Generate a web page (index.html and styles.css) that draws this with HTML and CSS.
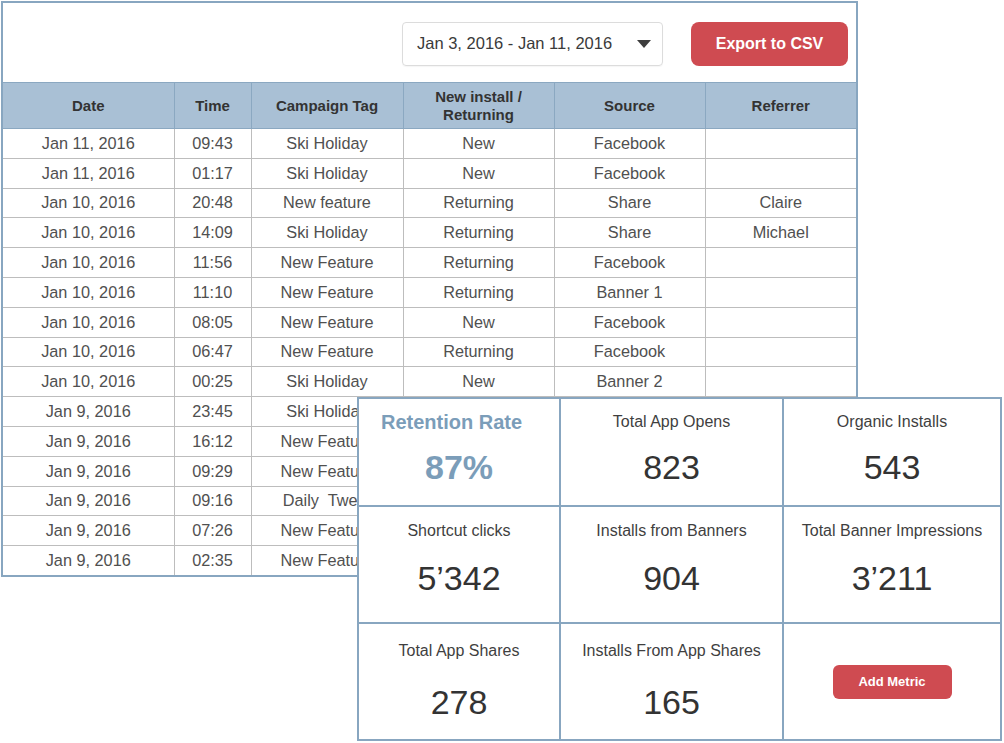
FILE: index.html
```html
<!DOCTYPE html>
<html>
<head>
<meta charset="utf-8">
<link rel="stylesheet" href="styles.css">
</head>
<body>
<div class="panel">
  <div class="toolbar">
    <div class="date-picker">
      <span>Jan 3, 2016 - Jan 11, 2016</span>
      <svg class="caret" width="14" height="8" viewBox="0 0 14 8"><path d="M0 0 L14 0 L7 8 Z" fill="#3d3d3d"/></svg>
    </div>
    <button class="btn-export">Export to CSV</button>
  </div>
  <table class="data">
    <colgroup>
      <col class="c-date"><col class="c-time"><col class="c-tag"><col class="c-new"><col class="c-src"><col class="c-ref">
    </colgroup>
    <thead>
      <tr><th>Date</th><th>Time</th><th>Campaign Tag</th><th>New install /<br>Returning</th><th>Source</th><th>Referrer</th></tr>
    </thead>
    <tbody>
      <tr><td>Jan 11, 2016</td><td>09:43</td><td>Ski Holiday</td><td>New</td><td>Facebook</td><td></td></tr>
      <tr><td>Jan 11, 2016</td><td>01:17</td><td>Ski Holiday</td><td>New</td><td>Facebook</td><td></td></tr>
      <tr><td>Jan 10, 2016</td><td>20:48</td><td>New feature</td><td>Returning</td><td>Share</td><td>Claire</td></tr>
      <tr><td>Jan 10, 2016</td><td>14:09</td><td>Ski Holiday</td><td>Returning</td><td>Share</td><td>Michael</td></tr>
      <tr><td>Jan 10, 2016</td><td>11:56</td><td>New Feature</td><td>Returning</td><td>Facebook</td><td></td></tr>
      <tr><td>Jan 10, 2016</td><td>11:10</td><td>New Feature</td><td>Returning</td><td>Banner 1</td><td></td></tr>
      <tr><td>Jan 10, 2016</td><td>08:05</td><td>New Feature</td><td>New</td><td>Facebook</td><td></td></tr>
      <tr><td>Jan 10, 2016</td><td>06:47</td><td>New Feature</td><td>Returning</td><td>Facebook</td><td></td></tr>
      <tr><td>Jan 10, 2016</td><td>00:25</td><td>Ski Holiday</td><td>New</td><td>Banner 2</td><td></td></tr>
      <tr><td>Jan 9, 2016</td><td>23:45</td><td class="clip">Ski Holiday</td><td></td><td></td><td></td></tr>
      <tr><td>Jan 9, 2016</td><td>16:12</td><td class="clip">New Feature</td><td></td><td></td><td></td></tr>
      <tr><td>Jan 9, 2016</td><td>09:29</td><td class="clip">New Feature</td><td></td><td></td><td></td></tr>
      <tr><td>Jan 9, 2016</td><td>09:16</td><td class="clip">Daily&nbsp; Tweet</td><td></td><td></td><td></td></tr>
      <tr><td>Jan 9, 2016</td><td>07:26</td><td class="clip">New Feature</td><td></td><td></td><td></td></tr>
      <tr><td>Jan 9, 2016</td><td>02:35</td><td class="clip">New Feature</td><td></td><td></td><td></td></tr>
    </tbody>
  </table>
</div>

<div class="metrics">
  <div class="metric">
    <div class="m-label accent">Retention Rate</div>
    <div class="m-value accent">87%</div>
  </div>
  <div class="metric">
    <div class="m-label">Total App Opens</div>
    <div class="m-value">823</div>
  </div>
  <div class="metric">
    <div class="m-label">Organic Installs</div>
    <div class="m-value">543</div>
  </div>
  <div class="metric row2">
    <div class="m-label">Shortcut clicks</div>
    <div class="m-value">5’342</div>
  </div>
  <div class="metric row2">
    <div class="m-label">Installs from Banners</div>
    <div class="m-value">904</div>
  </div>
  <div class="metric row2">
    <div class="m-label">Total Banner Impressions</div>
    <div class="m-value">3’211</div>
  </div>
  <div class="metric row3">
    <div class="m-label">Total App Shares</div>
    <div class="m-value">278</div>
  </div>
  <div class="metric row3">
    <div class="m-label">Installs From App Shares</div>
    <div class="m-value">165</div>
  </div>
  <div class="metric add-cell">
    <button class="btn-add">Add Metric</button>
  </div>
</div>
</body>
</html>
```

FILE: styles.css
```css
html, body {
  margin: 0;
  padding: 0;
  background: #ffffff;
}
body {
  font-family: "Liberation Sans", Arial, Helvetica, sans-serif;
  color: #444;
  position: relative;
  width: 1004px;
  height: 743px;
  overflow: hidden;
}
.panel {
  width: 857px;
  box-sizing: border-box;
  margin: 1px 0 0 1px;
  border: 2px solid #88a6c0;
  background: #fff;
}
.toolbar {
  height: 79px;
  display: flex;
  justify-content: flex-end;
  align-items: center;
  gap: 28px;
  padding-right: 8px;
  padding-top: 2px;
  box-sizing: border-box;
}
.date-picker {
  width: 261px;
  height: 44px;
  box-sizing: border-box;
  border: 1px solid #dcdcdc;
  border-radius: 4px;
  display: flex;
  align-items: center;
  justify-content: space-between;
  padding: 0 11px 0 14px;
  font-size: 16.5px;
  color: #3a3a3a;
  box-shadow: 0 1px 1px rgba(0,0,0,0.04);
}
.caret {
  display: block;
}
.btn-export {
  width: 157px;
  height: 44px;
  border: none;
  border-radius: 8px;
  background: #cf4b51;
  color: #fff;
  font-family: "Liberation Sans", Arial, sans-serif;
  font-weight: bold;
  font-size: 16px;
  padding: 0;
}
.data {
  width: 853px;
  border-collapse: collapse;
  table-layout: fixed;
}
.c-date { width: 171px; }
.c-time { width: 77px; }
.c-tag { width: 152px; }
.c-new { width: 151px; }
.c-src { width: 151px; }
.c-ref { width: 151px; }
.data th {
  background: #a9c0d5;
  color: #333;
  font-size: 15px;
  font-weight: bold;
  line-height: 18px;
  height: 46px;
  padding: 0;
  border-left: 1px solid #8ba8c1;
  border-top: 1px solid #8ba8c1;
  border-bottom: 1px solid #8ba8c1;
  box-sizing: border-box;
}
.data th:first-child { border-left: none; }
.data td {
  height: 29.8px;
  padding: 0;
  text-align: center;
  font-size: 16.3px;
  color: #505050;
  border-left: 1px solid #bdbdbd;
  border-top: 1px solid #bdbdbd;
  box-sizing: border-box;
  white-space: nowrap;
  overflow: hidden;
}
.data td:first-child { border-left: none; }
.data tbody tr:first-child td { border-top: none; }

.metrics {
  position: absolute;
  left: 357px;
  top: 397px;
  width: 645px;
  height: 344px;
  box-sizing: border-box;
  border: 2px solid #88a6c0;
  background: #88a6c0;
  display: grid;
  grid-template-columns: 200px 221px 1fr;
  grid-template-rows: 106px 115px 1fr;
  gap: 2px;
}
.metric {
  background: #fff;
  text-align: center;
  padding-top: 13px;
  box-sizing: border-box;
}
.metric.row2 { padding-top: 14px; }
.metric.row3 { padding-top: 17px; }
.m-label {
  font-size: 16px;
  line-height: 20px;
  color: #3f3f3f;
}
.m-value {
  font-size: 34px;
  line-height: 40px;
  margin-top: 15px;
  color: #333;
}
.metric.row2 .m-value { margin-top: 17px; }
.metric.row3 .m-value { margin-top: 21px; }
.m-label.accent {
  font-size: 20px;
  font-weight: bold;
  color: #7b9db9;
  padding-right: 15px;
}
.m-value.accent {
  font-weight: bold;
  color: #7b9db9;
}
.add-cell {
  display: flex;
  align-items: center;
  justify-content: center;
  padding-top: 0;
}
.btn-add {
  width: 119px;
  height: 34px;
  border: none;
  border-radius: 6px;
  background: #cf4b51;
  color: #fff;
  font-family: "Liberation Sans", Arial, sans-serif;
  font-weight: bold;
  font-size: 13px;
  padding: 0;
}
```
